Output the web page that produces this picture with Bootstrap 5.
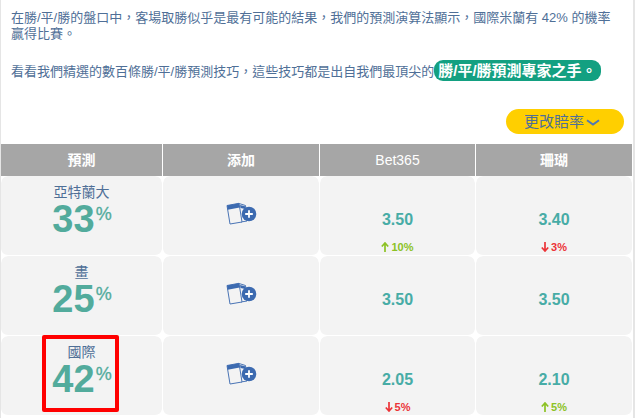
<!DOCTYPE html>
<html lang="zh-Hant"><head><meta charset="utf-8">
<link href="https://cdn.jsdelivr.net/npm/bootstrap@5.3.0/dist/css/bootstrap.min.css" rel="stylesheet">
<style>
html,body{height:100%;overflow:hidden}
body{background:#fff;font-family:"Liberation Sans","Noto Sans CJK TC",sans-serif;color:#4f6f97;font-size:13px;line-height:16px}
.page-edge{height:418px;width:635px;border-right:2px solid #e5e5e5}
.page-frame{height:418px;border-left:1px solid #e5e5e5}
.intro{padding:10px 10px 0 10px;height:106px}
.intro p{margin:0 0 21px}
.pill-note{background:#13a081;color:#fff;font-weight:700;font-size:15px;border-radius:9px;padding:2px 4px;white-space:nowrap}
.odds-row{height:30px;padding-right:9px;margin-bottom:8px}
.odds-btn{background:#ffcf00;color:#4f6f97;font-size:15px;border:0;border-radius:13px;height:25px;width:118px;padding:0 6px 0 0;line-height:25px}
.odds-btn svg{margin-left:2px}
.pred-grid{display:grid;grid-template-columns:161px 156px 155px 156px;column-gap:1px;grid-template-rows:32px 80px 80px 80px}
.head-cell{background:#a6a6a6;color:#fff;font-size:14px;line-height:32px;text-align:center}
.head-cell.cjk-b{font-weight:700}
.body-cell{background:#f3f3f3;background-clip:padding-box;border-bottom:1px solid transparent;border-radius:7px;text-align:center;position:relative}
.team{font-size:14px;line-height:16px;padding-top:8px}
.pct{color:#52ab9c;font-weight:700;font-size:38px;line-height:30px;margin-top:4px}
.pct sup{font-size:18px;font-weight:400;vertical-align:baseline;position:relative;top:-12px;left:1px;-webkit-text-stroke:.3px #52ab9c}
.add-ico{margin-top:26px}
.price{color:#47aca6;font-weight:700;font-size:16px;line-height:18px;padding-top:35px}
.move{font-size:11px;font-weight:700;line-height:12px;margin-top:12px;display:flex;justify-content:center;align-items:center;gap:2px}
.move.up{color:#8cc224}.move.down{color:#ec3337}
.mark-box{position:absolute;left:41px;top:-1px;width:77px;height:77px;border:4px solid #f00;border-radius:2px}
</style></head><body>
<div class="page-edge"><div class="page-frame">
<div class="intro">
<p>在勝/平/勝的盤口中，客場取勝似乎是最有可能的結果，我們的預測演算法顯示，國際米蘭有 42% 的機率贏得比賽。</p>
<p>看看我們精選的數百條勝/平/勝預測技巧，這些技巧都是出自我們最頂尖的<span class="pill-note">勝/平/勝預測專家之手。</span></p>
</div>
<div class="odds-row d-flex justify-content-end align-items-center">
<button type="button" class="odds-btn">更改賠率<svg width="14" height="7" viewBox="0 0 14 7"><path d="M1 1.2 7 5.5 13 1.2" fill="none" stroke="#4f77b5" stroke-width="2"/></svg></button>
</div>
<div class="pred-grid">
<div class="head-cell cjk-b">預測</div><div class="head-cell cjk-b">添加</div><div class="head-cell">Bet365</div><div class="head-cell cjk-b">珊瑚</div>

<div class="body-cell"><div class="team">亞特蘭大</div><div class="pct">33<sup>%</sup></div></div>
<div class="body-cell"><svg class="add-ico" width="31" height="23" viewBox="0 0 31 23"><use href="#addslip"/></svg></div>
<div class="body-cell"><div class="price">3.50</div><div class="move up"><svg width="8" height="10" viewBox="0 0 8 10"><path d="M4 10V1M.8 4.5 4 1l3.2 3.5" fill="none" stroke="currentColor" stroke-width="1.7"/></svg>10%</div></div>
<div class="body-cell"><div class="price">3.40</div><div class="move down"><svg width="8" height="10" viewBox="0 0 8 10"><path d="M4 0v9M.8 5.5 4 9l3.2-3.5" fill="none" stroke="currentColor" stroke-width="1.7"/></svg>3%</div></div>

<div class="body-cell"><div class="team">畫</div><div class="pct">25<sup>%</sup></div></div>
<div class="body-cell"><svg class="add-ico" width="31" height="23" viewBox="0 0 31 23"><use href="#addslip"/></svg></div>
<div class="body-cell"><div class="price">3.50</div></div>
<div class="body-cell"><div class="price">3.50</div></div>

<div class="body-cell"><div class="team">國際</div><div class="pct">42<sup>%</sup></div><div class="mark-box"></div></div>
<div class="body-cell"><svg class="add-ico" width="31" height="23" viewBox="0 0 31 23"><use href="#addslip"/></svg></div>
<div class="body-cell"><div class="price">2.05</div><div class="move down"><svg width="8" height="10" viewBox="0 0 8 10"><path d="M4 0v9M.8 5.5 4 9l3.2-3.5" fill="none" stroke="currentColor" stroke-width="1.7"/></svg>5%</div></div>
<div class="body-cell"><div class="price">2.10</div><div class="move up"><svg width="8" height="10" viewBox="0 0 8 10"><path d="M4 10V1M.8 4.5 4 1l3.2 3.5" fill="none" stroke="currentColor" stroke-width="1.7"/></svg>5%</div></div>
</div>
</div></div>
<svg width="0" height="0" class="d-block"><defs><g id="addslip">
<path d="M13 1.5 19.5 3.5 21 19 15 20" fill="#f3f3f3" stroke="#4a74b5" stroke-width="1"/>
<path d="M14 3 19 4.2 19.4 7 14.5 6Z" fill="#3c6ab0"/>
<path d="M1 3.5 13 1.3 16 20 4 22Z" fill="#f3f3f3" stroke="#4a74b5" stroke-width="1"/>
<path d="M1 3.5 13 1.3 13.7 5.5 1.7 7.7Z" fill="#3c6ab0"/>
<circle cx="23" cy="12" r="7.3" fill="#3c6ab0"/>
<path d="M23 8.2v7.6M19.2 12h7.6" stroke="#fff" stroke-width="1.8"/>
</g></defs></svg>
<script src="https://cdn.jsdelivr.net/npm/bootstrap@5.3.0/dist/js/bootstrap.bundle.min.js"></script>
</body></html>
